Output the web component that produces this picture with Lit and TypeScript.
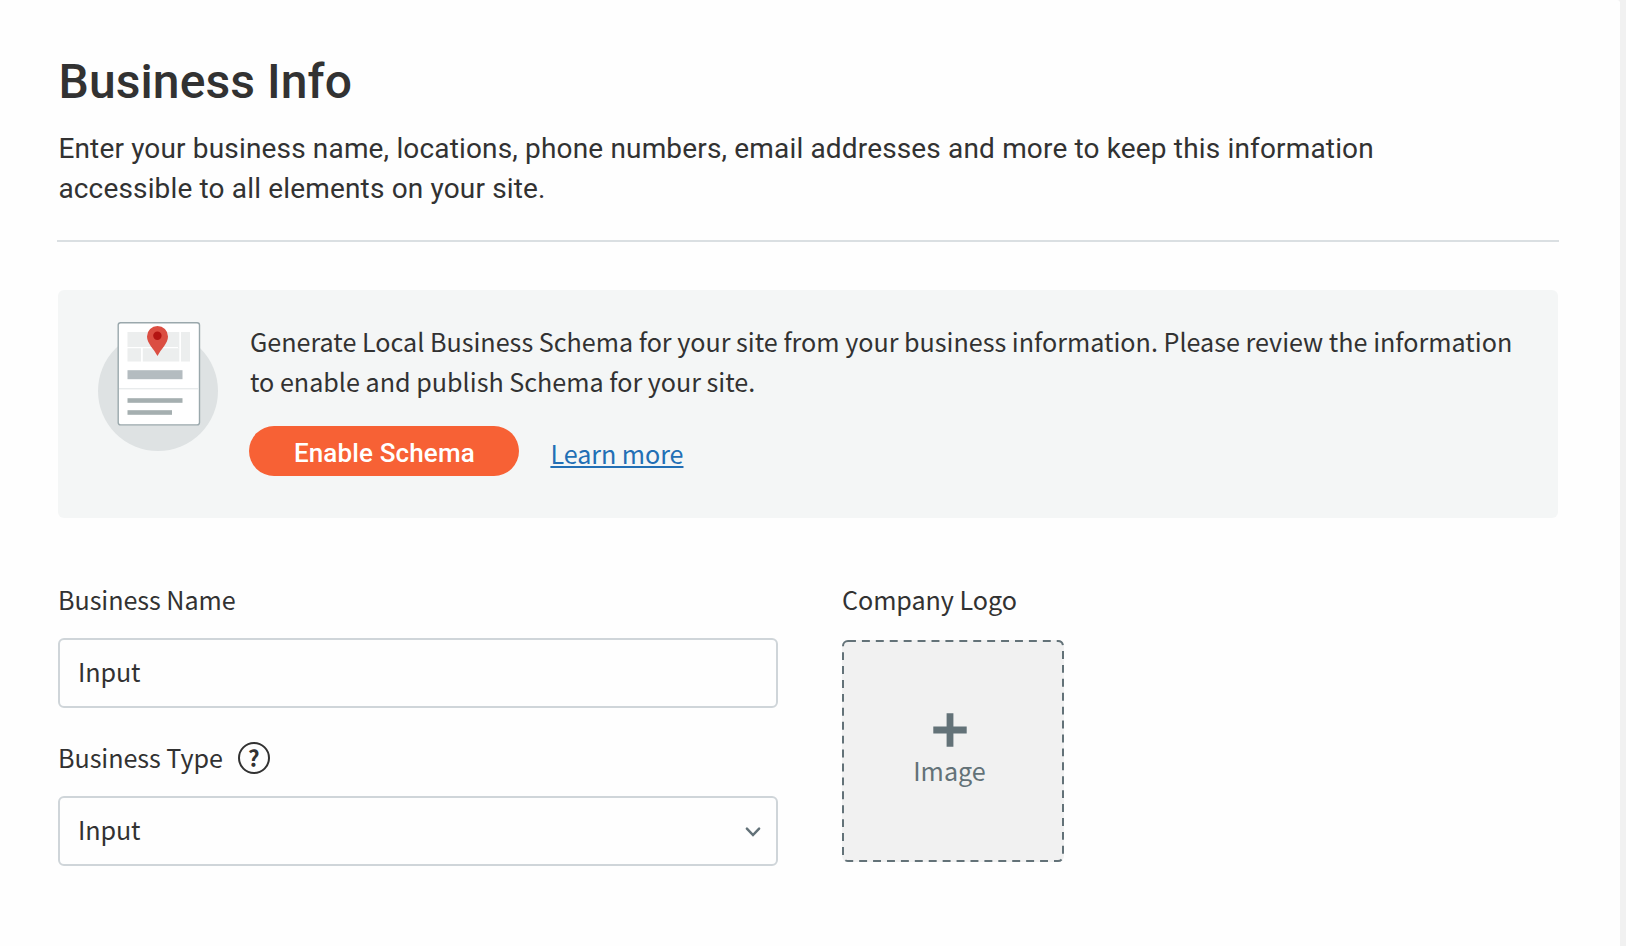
import { LitElement, html, css } from "lit";
import { customElement, property } from "lit/decorators.js";

@customElement("schema-icon")
export class SchemaIcon extends LitElement {
  static styles = css`
    :host { display: block; width: 120px; height: 132px; }
    svg { display: block; }
  `;

  render() {
    return html`
      <svg width="120" height="132" viewBox="98 320 120 132" aria-hidden="true">
        <circle cx="158" cy="391" r="60" fill="#dee2e3" />
        <rect x="118.2" y="322.7" width="81.3" height="102.2" rx="2.4" fill="#fff" stroke="#9aa8ac" stroke-width="1.4" />
        <path fill="#eceeee" d="M127.5 332H179.3V347H127.5ZM181 332H190V361.6H181ZM127.5 348.3H141V361.6H127.5ZM142.8 348.3H179.3V361.6H142.8Z" />
        <path d="M178 347V348.3H179.3V347Z" fill="#eceeee" />
        <rect x="127.5" y="370.2" width="55" height="9" fill="#b4bcc0" />
        <rect x="119" y="388" width="79.8" height="1.4" fill="#e8ebec" />
        <rect x="127.5" y="398.2" width="55" height="4.6" fill="#a5afb0" />
        <rect x="127.5" y="410.2" width="44.5" height="4.6" fill="#a5afb0" />
        <path d="M157.5 356C153.8 348.5 147 343.5 147 336.4A10.5 10.5 0 0 1 168 336.4C168 343.5 161.2 348.5 157.5 356Z" fill="#db4e42" />
        <circle cx="157.4" cy="335.8" r="4.2" fill="#b31412" />
      </svg>
    `;
  }
}

@customElement("field-box")
export class FieldBox extends LitElement {
  @property() value = "";
  @property({ type: Boolean }) dropdown = false;

  static styles = css`
    :host {
      display: flex;
      align-items: center;
      justify-content: space-between;
      box-sizing: border-box;
      width: 720px;
      height: 70px;
      padding: 0 15px 0 18px;
      border: 2px solid #cfd5d9;
      border-radius: 6px;
    }
    .value { line-height: 40px; padding-bottom: 4px; letter-spacing: -0.1px; }
    svg { display: block; margin-top: 1px; }
  `;

  render() {
    return html`
      <span class="value">${this.value}</span>
      ${this.dropdown
        ? html`<svg width="16" height="12" viewBox="0 0 16 12" aria-hidden="true">
            <path d="M1.9 2.7 8 9 14.1 2.7" fill="none" stroke="#627178" stroke-width="2.5" stroke-linecap="round" />
          </svg>`
        : null}
    `;
  }
}

@customElement("app-root")
export class AppRoot extends LitElement {
  static styles = css`
    :host {
      display: block;
      height: 946px;
      overflow: hidden;
      background: #f1f1f1;
      color: #323232;
      font: 400 25.13px/40px "Noto Sans CJK SC", "Noto Sans", sans-serif;
    }
    .card {
      box-sizing: border-box;
      width: 1620px;
      height: 946px;
      padding: 0 61px 0 57px;
      background: #fefefe;
      border-top-right-radius: 3px;
    }
    .header {
      box-sizing: border-box;
      height: 242px;
      padding: 53px 0 0 1px;
      border-bottom: 2px solid #dadfe2;
      font-family: Roboto, sans-serif;
    }
    h1 {
      margin: 0 0 0 0.5px;
      font-size: 48px;
      line-height: 57px;
      font-weight: 500;
      letter-spacing: 0.1px;
    }
    .intro {
      margin: 19px 0 0 0.4px;
      width: 1400px;
      font-size: 28px;
      letter-spacing: 0.16px;
    }
    .banner {
      box-sizing: border-box;
      display: flex;
      gap: 32px;
      width: 1500px;
      height: 228px;
      margin: 48px 0 0 1px;
      padding: 30px 0 0 40px;
      background: #f4f6f6;
      border-radius: 6px;
    }
    .banner p { margin: 1px 0 25px; width: 1290px; }
    .actions { display: flex; align-items: flex-start; gap: 31px; }
    button {
      width: 270px;
      height: 50px;
      margin: 0 0 0 -0.6px;
      padding: 4px 0 0;
      border: 0;
      border-radius: 25px;
      background: #f76135;
      color: #fff;
      font: 500 26px/46px Roboto, sans-serif;
      letter-spacing: 0.14px;
    }
    a {
      margin-top: 7px;
      color: #226fb5;
      letter-spacing: -0.05px;
      text-decoration: underline;
      text-decoration-thickness: 2px;
      text-underline-offset: 2px;
      text-decoration-skip-ink: none;
    }
    .form {
      display: flex;
      gap: 64px;
      margin: 61px 0 0 1px;
    }
    .label {
      display: flex;
      align-items: center;
      gap: 15px;
      height: 40px;
      margin-bottom: 19px;
      letter-spacing: -0.05px;
    }
    .second { margin-top: 29px; }
    .help {
      box-sizing: border-box;
      width: 32px;
      height: 32px;
      margin-top: 2px;
      border: 2px solid #323232;
      border-radius: 50%;
      font-size: 22.5px;
      font-weight: 700;
      line-height: 26px;
      text-align: center;
    }
    .upload {
      position: relative;
      display: flex;
      flex-direction: column;
      align-items: center;
      box-sizing: border-box;
      width: 222px;
      height: 222px;
      margin-top: 21px;
      padding: 73px 7px 0 0;
      background: #f1f1f1;
      border-radius: 6px;
      color: #637278;
    }
    .dashes { position: absolute; inset: 0; }
    .plus { display: block; width: 34px; height: 34px; }
    .caption { margin-top: 3px; }
    .logo .label { margin-bottom: 0; }
  `;

  render() {
    return html`
      <main class="card">
        <header class="header">
          <h1>Business Info</h1>
          <p class="intro">
            Enter your business name, locations, phone numbers, email addresses and more to keep this information<br />accessible to all elements on your site.
          </p>
        </header>
        <section class="banner">
          <schema-icon></schema-icon>
          <div>
            <p>
              Generate Local Business Schema for your site from your business information. Please review the information<br />to enable and publish Schema for your site.
            </p>
            <div class="actions">
              <button>Enable Schema</button>
              <a>Learn more</a>
            </div>
          </div>
        </section>
        <section class="form">
          <div>
            <div class="label">Business Name</div>
            <field-box value="Input"></field-box>
            <div class="label second">Business Type <span class="help">?</span></div>
            <field-box value="Input" dropdown></field-box>
          </div>
          <div class="logo">
            <div class="label">Company Logo</div>
            <div class="upload">
              <svg class="dashes" width="222" height="222" viewBox="0 0 222 222" aria-hidden="true">
                <rect x="1" y="1" width="220" height="220" rx="5" fill="none" stroke="#637278" stroke-width="2" pathLength="875.9" stroke-dasharray="8 6" />
              </svg>
              <svg class="plus" viewBox="0 0 34 34" aria-hidden="true">
                <path d="M13.6.3h6.8v13.3h13.3v6.8H20.4v13.3h-6.8V20.4H.3v-6.8h13.3Z" fill="#637278" />
              </svg>
              <span class="caption">Image</span>
            </div>
          </div>
        </section>
      </main>
    `;
  }
}
